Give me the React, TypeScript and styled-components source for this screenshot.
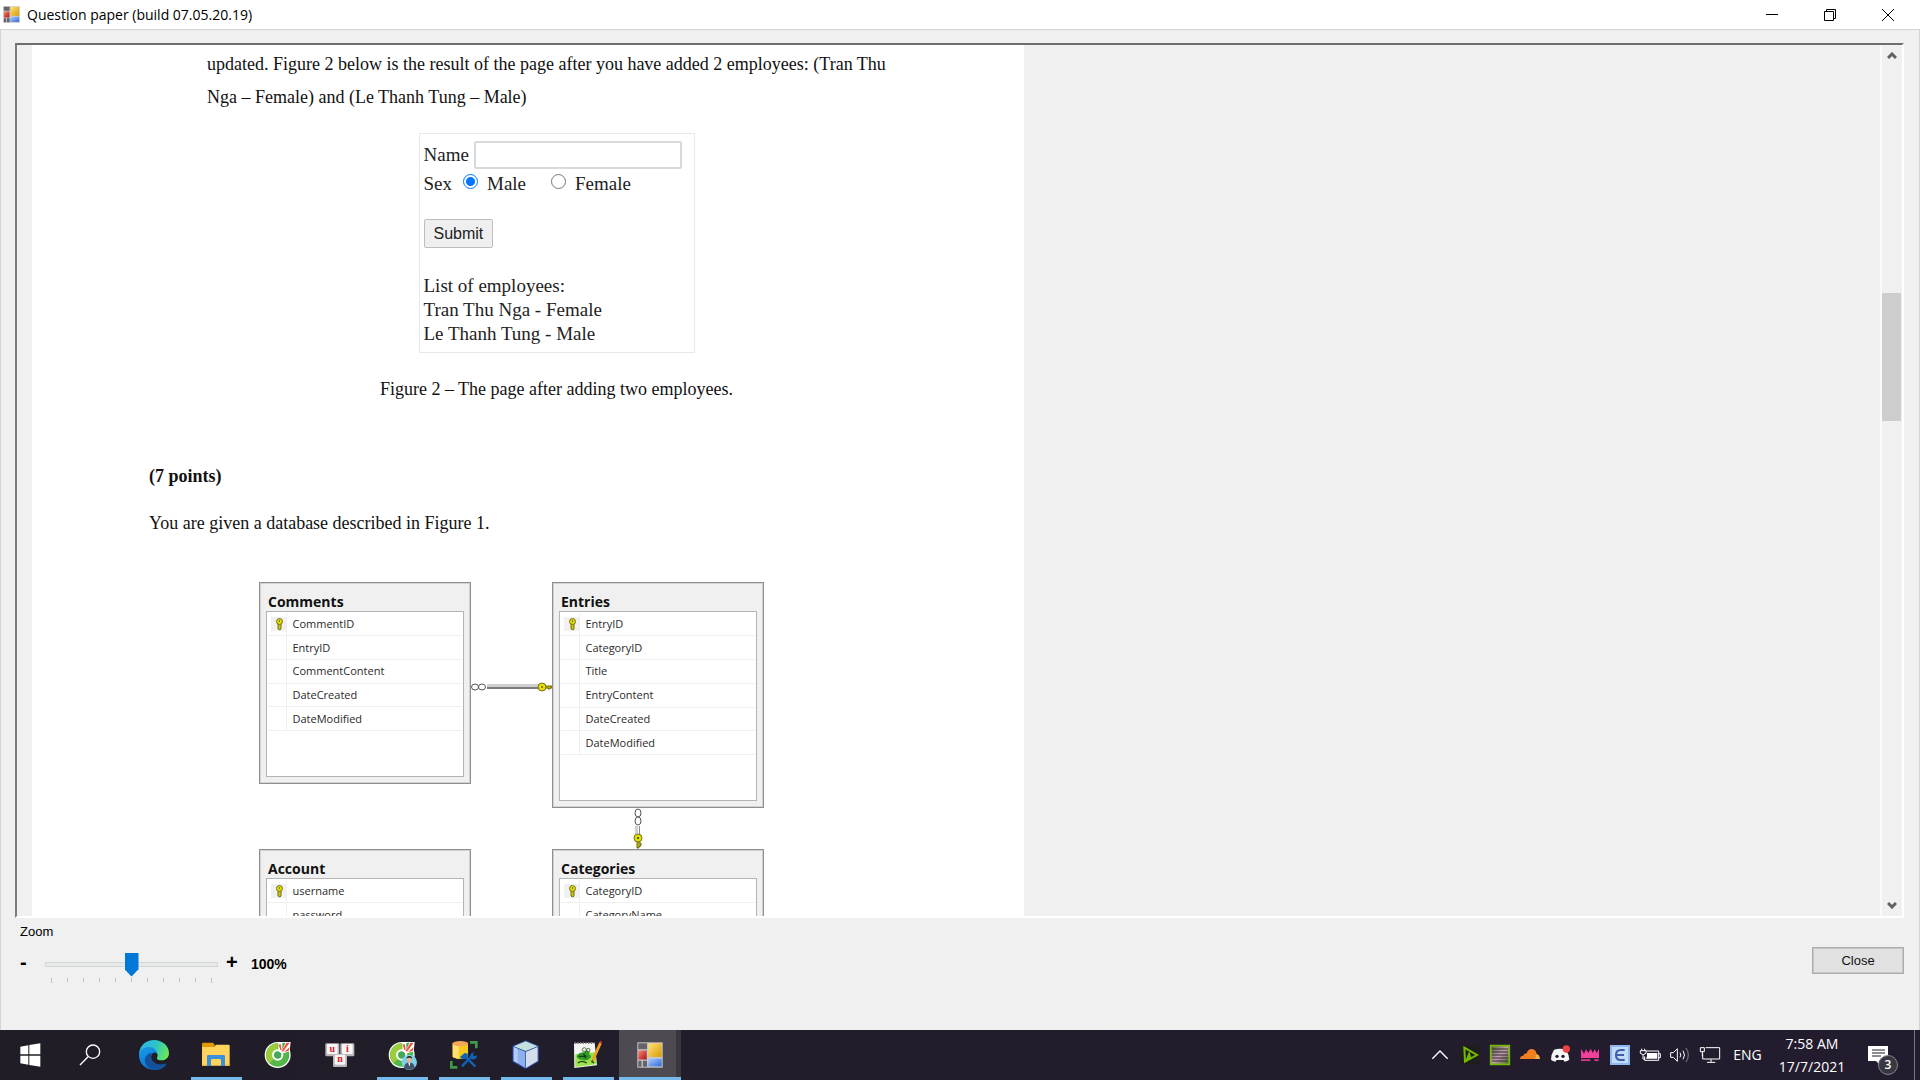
import React from "react";
import styled, { createGlobalStyle } from "styled-components";

const sans = `"Liberation Sans", Arial, sans-serif`;
const serif = `"Liberation Serif", "Times New Roman", serif`;
const ui = `"Open Sans", "Noto Sans", sans-serif`;

const GlobalStyle = createGlobalStyle`
  *, *::before, *::after { box-sizing: border-box; }
  body { margin: 0; background: #f0f0f0; overflow: hidden; }
  button { cursor: default; }
`;

/* ---------- window ---------- */

const Desktop = styled.div`
  display: flex;
  flex-direction: column;
  height: 100vh;
  color: #000;
  font-family: ${sans};
  font-size: 13px;
`;

const TitleBar = styled.header`
  display: flex;
  align-items: center;
  flex: none;
  height: 29px;
  padding: 0 3px;
  background: #fff;
`;

const Title = styled.h1`
  flex: 1;
  margin: 0 0 0 7px;
  font: 400 14px/20px ${ui};
`;

const CaptionButton = styled.button`
  display: grid;
  place-items: center;
  width: 58px;
  height: 29px;
  padding: 0;
  border: 0;
  background: transparent;
`;

const Client = styled.main`
  display: flex;
  flex-direction: column;
  flex: 1;
  min-height: 0;
  padding: 13px 15px 0 14px;
  border: 1px solid #d4d4d4;
  border-bottom: 0;
  background: #f0f0f0;
`;

const Viewer = styled.section`
  display: flex;
  flex: 1;
  min-height: 0;
  border: 2px solid;
  border-color: #6e6e6e #fff #fff #7c7c7c;
  overflow: hidden;
`;

const Canvas = styled.div`
  flex: 1;
  min-width: 0;
  padding-left: 15px;
  overflow: hidden;
`;

const ScrollBar = styled.div`
  display: flex;
  flex-direction: column;
  flex: none;
  width: 22px;
  padding-right: 1px;
  border-left: 2px solid #fafafa;
  background: #f0f0f0;
`;

const ScrollArrow = styled.button`
  display: grid;
  place-items: center;
  flex: none;
  height: 22px;
  padding: 0;
  border: 0;
  background: transparent;
`;

const ScrollGap = styled.div<{ $grow: number }>`
  flex: ${(p) => p.$grow} 1 0;
`;

const ScrollThumb = styled.div`
  flex: 128 1 0;
  background: #cdcdcd;
`;

/* ---------- document ---------- */

const Page = styled.article`
  width: 992px;
  max-width: 100%;
  min-height: 100%;
  padding: 3px 60px 0 117px;
  background: #fff;
  color: #111;
  font: 18px/33px ${serif};
`;

const Paragraph = styled.p<{ $indent?: boolean; $top?: number; $bold?: boolean; $center?: boolean }>`
  margin: ${(p) => p.$top ?? 0}px 0 0;
  padding-left: ${(p) => (p.$indent ? 58 : 0)}px;
  font-weight: ${(p) => (p.$bold ? 700 : 400)};
  text-align: ${(p) => (p.$center ? "center" : "left")};
`;

const EmployeeForm = styled.form`
  width: 276px;
  margin: 19px auto 0;
  padding: 7px 4px 6px;
  border: 1px solid #e9e9e9;
  color: #222;
  font-size: 19px;
  line-height: 24px;
`;

const FormRow = styled.div<{ $height: number }>`
  display: flex;
  align-items: center;
  height: ${(p) => p.$height}px;
`;

const NameInput = styled.input`
  width: 208px;
  height: 28px;
  margin-left: 5px;
  padding: 0 4px;
  border: 2px solid #d9d9d9;
  border-radius: 2px;
  background: #fff;
  font: 16px ${sans};
`;

const Radio = styled.input`
  appearance: none;
  width: 15px;
  height: 15px;
  margin: 0 9px 6px 0;
  border: 1px solid #767676;
  border-radius: 50%;
  background: #fff;
  &:checked {
    border-color: #0075ff;
    background: radial-gradient(circle, #0075ff 4px, #fff 5px);
  }
`;

const Choice = styled.label<{ $gap: number }>`
  display: flex;
  align-items: center;
  margin-left: ${(p) => p.$gap}px;
`;

const SubmitButton = styled.button`
  display: block;
  height: 29px;
  margin: 20px 0 26px;
  padding: 0 9px;
  border: 1px solid #bdbdbd;
  border-radius: 2px;
  background: #efefef;
  color: #222;
  font: 16px ${sans};
`;

/* ---------- diagram ---------- */

const Diagram = styled.div`
  display: grid;
  grid-template-columns: 212px 81px 212px;
  grid-template-rows: auto 41px auto;
  align-items: start;
  margin: 42px 0 0 110px;
`;

const Entity = styled.section<{ $row: number; $column: number }>`
  grid-area: ${(p) => p.$row} / ${(p) => p.$column};
  padding: 7px 6px 6px;
  border: 1px solid #8f8f8f;
  background: #f0f0f0;
  box-shadow: inset 0 0 0 1px #d2d2d2;
`;

const EntityName = styled.h2`
  margin: 0;
  padding: 2px 0 0 2px;
  color: #111;
  font: 700 14px/19px ${ui};
`;

const EntityBody = styled.div`
  padding: 1px 1px 45px;
  border: 1px solid #b4b4b4;
  background: #fff;
`;

const Fields = styled.table<{ $rows: number }>`
  width: 100%;
  height: ${(p) => Math.round((p.$rows * 142) / 6)}px;
  border-collapse: collapse;
  color: #2a2a2a;
  font: 11px/14px ${ui};
  td {
    padding: 0 0 0 6px;
    border-bottom: 1px solid #efefef;
  }
  td:first-child {
    width: 18px;
    padding: 0 0 0 3px;
    border-right: 1px solid #efefef;
  }
`;

const KeyCell = styled.span`
  display: flex;
  justify-content: flex-end;
  padding-right: 2px;
  background: #f1f1f1;
`;

const HorizontalLink = styled.svg`
  grid-area: 1 / 2;
  margin-top: 98px;
`;

const VerticalLink = styled.svg`
  grid-area: 2 / 3;
  margin-left: 78px;
`;

/* ---------- footer ---------- */

const Footer = styled.footer`
  display: flex;
  justify-content: space-between;
  align-items: flex-start;
  flex: none;
  height: 112px;
  padding-left: 5px;
`;

const ZoomLabel = styled.label`
  display: block;
  margin-top: 6px;
  line-height: 16px;
`;

const ZoomRow = styled.div`
  display: flex;
  align-items: flex-start;
  margin-top: 11px;
`;

const StepButton = styled.button`
  width: 25px;
  height: 22px;
  padding: 0;
  border: 0;
  background: transparent;
  color: #000;
  font: 700 20px/20px ${sans};
  text-align: left;
`;

const SliderBox = styled.div`
  width: 173px;
  margin-right: 8px;
  padding-top: 1px;
`;

const Slider = styled.input`
  appearance: none;
  display: block;
  width: 100%;
  height: 24px;
  margin: 0;
  background: transparent;
  &::-webkit-slider-runnable-track {
    height: 5px;
    border: 1px solid #d6d6d6;
    background: #e7eaea;
  }
  &::-webkit-slider-thumb {
    appearance: none;
    width: 14px;
    height: 24px;
    margin-top: -10px;
    background: #0078d7;
    clip-path: polygon(0 0, 100% 0, 100% 70%, 50% 100%, 0 70%);
  }
`;

const Ticks = styled.div`
  display: flex;
  justify-content: space-between;
  padding: 2px 6px 0;
`;

const Tick = styled.span`
  width: 1px;
  height: 4px;
  background: #c0c0c0;
  &:first-child, &:last-child { height: 5px; }
`;

const ZoomValue = styled.output`
  font: 700 14px/26px ${sans};
`;

const CloseButton = styled.button`
  width: 92px;
  height: 27px;
  margin-top: 29px;
  padding: 0;
  border: 1px solid #adadad;
  outline: 1px solid #c6c6c6;
  outline-offset: -2px;
  background: #e1e1e1;
  color: #111;
  font: 13px ${sans};
`;

/* ---------- taskbar ---------- */

const Taskbar = styled.nav`
  display: flex;
  flex: none;
  height: 50px;
  background: linear-gradient(90deg, #201d27, #231c2f);
  color: #fff;
  font: 14px/22px ${ui};
`;

const TaskButton = styled.button<{ $open?: boolean; $active?: boolean }>`
  display: grid;
  place-items: center;
  width: 62px;
  height: 50px;
  padding: 0;
  border: 0;
  background:
    linear-gradient(#76b9ed, #76b9ed) center bottom / ${(p) => (p.$active ? 62 : p.$open ? 51 : 0)}px 3px no-repeat,
    ${(p) => (p.$active ? "linear-gradient(90deg, #4d4a51 57px, #39363e 57px)" : "none")};
  &:first-child { width: 61px; }
`;

const Tray = styled.div`
  display: flex;
  align-items: center;
  margin-left: auto;
`;

const TrayButton = styled.button`
  display: grid;
  place-items: center;
  width: 30px;
  height: 50px;
  padding: 0;
  border: 0;
  background: transparent;
`;

const Language = styled.button`
  width: 45px;
  padding: 0;
  border: 0;
  background: transparent;
  color: inherit;
  font: inherit;
`;

const Clock = styled.time`
  width: 84px;
  line-height: 23px;
  text-align: center;
`;

const NoticeButton = styled.button`
  width: 61px;
  height: 50px;
  padding: 0 0 0 14px;
  border: 0;
  border-right: 1px solid #77737f;
  margin-right: 5px;
  background: transparent;
  text-align: left;
`;

const NoticeMark = styled.span`
  display: block;
  position: relative;
  width: 32px;
  height: 20px;
`;

const Badge = styled.span`
  position: absolute;
  left: 10px;
  top: 10px;
  width: 20px;
  height: 20px;
  border: 1px solid #85828a;
  border-radius: 50%;
  background: #3a3740;
  color: #fff;
  font: 600 12px/18px ${ui};
  text-align: center;
`;

/* ---------- drawings ---------- */

const FormsIcon = ({ size }: { size: number }) => (
  <svg width={size} height={size} viewBox="0 0 80 80" aria-hidden="true">
    <defs>
      <linearGradient id="fy" x2="1" y2="1"><stop stopColor="#ffe27a" /><stop offset="1" stopColor="#d99b00" /></linearGradient>
      <linearGradient id="fr" x2="1" y2="1"><stop stopColor="#f58a7a" /><stop offset="1" stopColor="#b01010" /></linearGradient>
      <linearGradient id="fb" x2="1" y2="1"><stop stopColor="#a9ccff" /><stop offset="1" stopColor="#2f68d8" /></linearGradient>
    </defs>
    <path d="M1 1h78v78H1z" fill="#c9c8cc" />
    <path d="M4 4h27v18H4zM4 58h10v18H4zM18 58h13v18H18z" fill="#66646b" />
    <path d="M35 4h41v42H35z" fill="url(#fy)" />
    <path d="M4 26h26v28H4z" fill="url(#fr)" />
    <path d="M35 51h41v24H35z" fill="url(#fb)" />
  </svg>
);

const Task = ({ children }: { children: React.ReactNode }) => (
  <svg width="32" height="32" viewBox="0 0 96 96" aria-hidden="true">{children}</svg>
);

const TrayIcon = ({ children }: { children: React.ReactNode }) => (
  <svg width="24" height="24" viewBox="0 0 72 72" fill="none" aria-hidden="true">{children}</svg>
);

const CocCocMark = () => (
  <>
    <circle cx="47" cy="48" r="39" fill="#fff" />
    <circle cx="47" cy="48" r="35" fill="#54b848" />
    <path d="M47 13a35 35 0 0 0-24 60l24-25z" fill="#9bcc3c" />
    <circle cx="47" cy="48" r="17" fill="#fff" />
    <circle cx="47" cy="48" r="11" fill="#43a956" />
    <path d="M49 9h37l-3 28-24 7-10-9z" fill="#fff" />
    <path d="M50 17l6-2 3 19-4-1zM73 12l10-1-20 27-4-2zM66 40l17-16-3 11z" fill="#f0503c" />
    <path d="M61 12l9-1-9 21z" fill="#43a956" />
  </>
);

const KeyGlyph = () => (
  <svg width="9" height="14" viewBox="0 0 9 14" aria-hidden="true">
    <path d="M3 6h3v6l-1 1-2-1z" fill="#c9c400" stroke="#77741a" />
    <ellipse cx="4.5" cy="4.5" rx="3" ry="3" fill="#dedb00" stroke="#77741a" />
    <path d="M4 3h1v2H4z" fill="#77741a" />
  </svg>
);

const UniKey = ({ x, y, t }: { x: number; y: number; t: string }) => (
  <>
    <rect x={x} y={y} width="42" height="39" rx="4" fill="#b9b7b9" />
    <rect x={x + 5} y={y + 2} width="32" height="30" rx="4" fill="#f7f5f5" />
    <text x={x + 21} y={y + 25} textAnchor="middle" fontFamily="Liberation Serif" fontWeight="700" fontSize="30" fill="#e52020">{t}</text>
  </>
);

/* ---------- data ---------- */

const entities = [
  { name: "Comments", row: 1, column: 1, fields: ["CommentID", "EntryID", "CommentContent", "DateCreated", "DateModified"] },
  { name: "Entries", row: 1, column: 3, fields: ["EntryID", "CategoryID", "Title", "EntryContent", "DateCreated", "DateModified"] },
  { name: "Account", row: 3, column: 1, fields: ["username", "password"] },
  { name: "Categories", row: 3, column: 3, fields: ["CategoryID", "CategoryName"] },
];

export default function App() {
  const [zoom, setZoom] = React.useState(100);
  return (
    <Desktop>
      <GlobalStyle />
      <TitleBar>
        <FormsIcon size={17} />
        <Title>Question paper (build 07.05.20.19)</Title>
        <CaptionButton aria-label="Minimize">
          <svg width="12" height="12"><path d="M0 5.500h12" stroke="#000" /></svg>
        </CaptionButton>
        <CaptionButton aria-label="Restore">
          <svg width="12" height="12" fill="none" stroke="#000"><path d="M.5 2.500h9v9h-9zM2.500 2.500v-2h9v9h-2" /></svg>
        </CaptionButton>
        <CaptionButton aria-label="Close window">
          <svg width="12" height="12" stroke="#000"><path d="M0 0l12 12M12 0L0 12" /></svg>
        </CaptionButton>
      </TitleBar>

      <Client>
        <Viewer>
          <Canvas>
            <Page>
              <Paragraph $indent>
                updated. Figure 2 below is the result of the page after you have added 2 employees: (Tran Thu
                <br />
                Nga – Female) and (Le Thanh Tung – Male)
              </Paragraph>

              <EmployeeForm onSubmit={(e) => e.preventDefault()}>
                <FormRow $height={28}>
                  <label htmlFor="name">Name</label>
                  <NameInput id="name" type="text" />
                </FormRow>
                <FormRow $height={30}>
                  Sex
                  <Choice $gap={11}><Radio type="radio" name="sex" defaultChecked />Male</Choice>
                  <Choice $gap={25}><Radio type="radio" name="sex" />Female</Choice>
                </FormRow>
                <SubmitButton type="submit">Submit</SubmitButton>
                <div>List of employees:</div>
                <div>Tran Thu Nga - Female</div>
                <div>Le Thanh Tung - Male</div>
              </EmployeeForm>

              <Paragraph $center $top={20}>Figure 2 – The page after adding two employees.</Paragraph>
              <Paragraph $bold $top={54}>(7 points)</Paragraph>
              <Paragraph $top={14}>You are given a database described in Figure 1.</Paragraph>

              <Diagram>
                {entities.map(({ name, row, column, fields }) => (
                  <Entity key={name} $row={row} $column={column}>
                    <EntityName>{name}</EntityName>
                    <EntityBody>
                      <Fields $rows={fields.length} aria-label={name}>
                        <tbody>
                          {fields.map((field, i) => (
                            <tr key={field}>
                              <td>{i === 0 && <KeyCell><KeyGlyph /></KeyCell>}</td>
                              <td>{field}</td>
                            </tr>
                          ))}
                        </tbody>
                      </Fields>
                    </EntityBody>
                  </Entity>
                ))}
                <HorizontalLink width="81" height="14" viewBox="0 0 81 14" fill="none" aria-hidden="true">
                  <path d="M16 5.500h52" stroke="#d0d0d0" strokeWidth="3" />
                  <path d="M16 8h52" stroke="#7b7b7b" strokeWidth="2" />
                  <ellipse cx="4" cy="7" rx="3.500" ry="3" stroke="#555" fill="#fff" />
                  <ellipse cx="11" cy="7" rx="3.500" ry="3" stroke="#555" fill="#fff" />
                  <path d="M74 6h7v2h-2v1h-2V8h-3z" fill="#b8b400" stroke="#6d6a18" />
                  <circle cx="71" cy="7" r="4" fill="#e2df00" stroke="#77741a" />
                  <circle cx="71" cy="7" r="1" fill="#6d6a18" />
                </HorizontalLink>
                <VerticalLink width="16" height="41" viewBox="0 0 16 41" fill="none" aria-hidden="true">
                  <path d="M6.500 18v8" stroke="#d0d0d0" strokeWidth="3" />
                  <path d="M9.500 18v8" stroke="#8a8a8a" />
                  <ellipse cx="8" cy="5" rx="3" ry="4" stroke="#555" fill="#fff" />
                  <ellipse cx="8" cy="13" rx="3" ry="4" stroke="#555" fill="#fff" />
                  <path d="M7 33h2v2h2v3H9v2H7z" fill="#b8b400" stroke="#6d6a18" />
                  <circle cx="8" cy="30" r="4" fill="#e2df00" stroke="#77741a" />
                  <circle cx="8" cy="30" r="1" fill="#333" />
                </VerticalLink>
              </Diagram>
            </Page>
          </Canvas>
          <ScrollBar>
            <ScrollArrow aria-label="Scroll up">
              <svg width="10" height="8"><path d="M1 6l4-4 4 4" fill="none" stroke="#606060" strokeWidth="3" /></svg>
            </ScrollArrow>
            <ScrollGap $grow={226} />
            <ScrollThumb />
            <ScrollGap $grow={473} />
            <ScrollArrow aria-label="Scroll down">
              <svg width="10" height="8"><path d="M1 2l4 4 4-4" fill="none" stroke="#606060" strokeWidth="3" /></svg>
            </ScrollArrow>
          </ScrollBar>
        </Viewer>

        <Footer>
          <div>
            <ZoomLabel htmlFor="zoom">Zoom</ZoomLabel>
            <ZoomRow>
              <StepButton aria-label="Zoom out" onClick={() => setZoom(zoom - 10)}>-</StepButton>
              <SliderBox>
                <Slider id="zoom" type="range" min={0} max={200} value={zoom} onChange={(e) => setZoom(+e.target.value)} />
                <Ticks>{Array.from({ length: 11 }, (_, i) => <Tick key={i} />)}</Ticks>
              </SliderBox>
              <StepButton aria-label="Zoom in" onClick={() => setZoom(zoom + 10)}>+</StepButton>
              <ZoomValue htmlFor="zoom">{zoom}%</ZoomValue>
            </ZoomRow>
          </div>
          <CloseButton>Close</CloseButton>
        </Footer>
      </Client>

      <Taskbar>
        <TaskButton aria-label="Start">
          <Task><path d="M16 23l24-4v27H16zM43 18l33-5v33H43zM16 50h24v27l-24-4zM43 50h33v33l-33-5z" fill="#fff" /></Task>
        </TaskButton>
        <TaskButton aria-label="Search">
          <Task><g fill="none" stroke="#fff" strokeWidth="4"><circle cx="51" cy="38" r="20" /><path d="M36 53L12 78" /></g></Task>
        </TaskButton>
        <TaskButton aria-label="Microsoft Edge">
          <Task>
            <defs>
              <linearGradient id="e1" x1="0" y1=".3" x2="1" y2=".6"><stop stopColor="#2fb5e8" /><stop offset=".5" stopColor="#2cc3c9" /><stop offset="1" stopColor="#6be850" /></linearGradient>
              <linearGradient id="e2" x1="0" y1="0" x2=".6" y2="1"><stop stopColor="#1a9be8" /><stop offset="1" stopColor="#0a6fd0" /></linearGradient>
            </defs>
            <path d="M3 44C6 18 25 3 48 3c27 0 45 20 45 39 0 15-11 22-22 22-10 0-16-4-14-8 5-8 1-20-15-20C22 36 8 42 3 44z" fill="url(#e1)" />
            <path d="M3 46c3-16 16-22 30-22 14 0 24 9 24 20-4-6-14-4-17 5-5 19 10 33 26 33 7 0 12-2 18-4-8 9-20 15-35 15C22 93 2 73 3 46z" fill="url(#e2)" />
            <path d="M41 41c-17 3-25 19-18 33 6 12 17 18 29 19 14 0 27-8 34-19-4-2-14 4-24 2-15-3-27-17-21-35z" fill="#12529c" />
          </Task>
        </TaskButton>
        <TaskButton $open aria-label="File Explorer">
          <Task>
            <path d="M6 14q0-3 3-3h30l6 8-4 6H6z" fill="#e09a00" />
            <path d="M6 24h36l6-7h38q3 0 3 3v60H6z" fill="#ffd35c" />
            <path d="M21 81V52q0-4 4-4h46q4 0 4 4v29H63V63q0-3-3-3H36q-3 0-3 3v18z" fill="#3a8fd9" />
            <path d="M6 77h15v4H6zM75 77h14v4H75z" fill="#e9b233" />
          </Task>
        </TaskButton>
        <TaskButton aria-label="Browser"><Task><CocCocMark /></Task></TaskButton>
        <TaskButton aria-label="Keyboard">
          <Task><UniKey x={4} y={13} t="u" /><UniKey x={49} y={13} t="i" /><UniKey x={27} y={45} t="n" /></Task>
        </TaskButton>
        <TaskButton $open aria-label="Browser profile">
          <Task>
            <CocCocMark />
            <circle cx="70" cy="70" r="23" fill="#7fd0ea" />
            <path d="M54 86q2-15 16-16 14 1 16 16-16 12-32 0z" fill="#44536b" />
            <ellipse cx="70" cy="62" rx="7" ry="9" fill="#e8b48a" />
            <path d="M62 60q-1-9 8-9t8 9l-3-4H65z" fill="#222" />
            <path d="M67 71h6l-3 12z" fill="#fff" />
          </Task>
        </TaskButton>
        <TaskButton $open aria-label="Database tools">
          <Task>
            <path d="M14 12v42q23 12 46 0V12z" fill="#f7c81e" />
            <path d="M14 12v42q9 5 18 6V12z" fill="#ffe070" />
            <ellipse cx="37" cy="14" rx="23" ry="8" fill="#f2a65a" />
            <path d="M66 6h23v22h-8V14H66zM6 66h8v15h14v8H6z" fill="#3f9b45" />
            <path d="M42 82l32-34M50 50l32 33" stroke="#0f63b5" strokeWidth="7" />
            <path d="M36 54l14-12 14 4-6 4 2 6-6 6-6-4-4 4zM66 52l4-9 8-3-3 8 4 4 8-3-2 9-9 4-8-3z" fill="#0f63b5" />
          </Task>
        </TaskButton>
        <TaskButton $open aria-label="NetBeans">
          <Task>
            <path d="M47 4l40 16v48L47 91 7 68V20z" fill="#26408f" />
            <path d="M47 7l36 15-36 14L11 22z" fill="#c5e0dc" />
            <path d="M11 24l35 14v49L11 66z" fill="#8fb0ef" />
            <path d="M48 38l35-14v42L48 87z" fill="#d3dcea" />
            <path d="M11 24l12 5v44l-12-7z" fill="#b3cbf8" />
          </Task>
        </TaskButton>
        <TaskButton $open aria-label="Notepad++">
          <Task>
            <path d="M6 13l62-2 7 68-68 8z" fill="#f4f6f4" />
            <path d="M10 46l60-6 3 36-63 8z" fill="#9be24a" />
            <path d="M8 12h58" stroke="#7b7b7b" strokeWidth="6" strokeDasharray="4 4" />
            <path d="M14 52q6-12 22-12 6-10 14-6 6 6 0 12 10 2 6 10-12 12-24 6-14 2-18-10z" fill="#2f9a2a" />
            <path d="M20 52h24M34 44q8 6 6 14M18 72q12-10 26 0M58 66l8 6" stroke="#163f14" strokeWidth="4" fill="none" />
            <circle cx="37" cy="32" r="6" fill="#e9f5d8" stroke="#163f14" strokeWidth="2" />
            <circle cx="49" cy="33" r="5" fill="#e9f5d8" stroke="#163f14" strokeWidth="2" />
            <path d="M82 10l7 4-22 50-8 6 1-11z" fill="#f0a020" />
            <path d="M82 10l7 4 1-6-5-3z" fill="#c33" />
            <path d="M60 63l4 3-5 5z" fill="#333" />
          </Task>
        </TaskButton>
        <TaskButton $active aria-label="Question paper"><FormsIcon size={26} /></TaskButton>

        <Tray>
          <TrayButton aria-label="Show hidden icons"><TrayIcon><path d="M13 47l23-23 23 23" stroke="#fff" strokeWidth="4" /></TrayIcon></TrayButton>
          <TrayButton aria-label="Graphics">
            <TrayIcon><path d="M6 8h58v56H6z" fill="#1c1f1a" /><path d="M19 14l38 22-36 20z" stroke="#76b900" strokeWidth="6" /><path d="M21 56l13-32 6 22z" fill="#76b900" /></TrayIcon>
          </TrayButton>
          <TrayButton aria-label="Monitor">
            <TrayIcon>
              <defs><linearGradient id="mon" x2="1" y2="1"><stop stopColor="#4e5d38" /><stop offset=".5" stopColor="#c89ab8" /><stop offset="1" stopColor="#45662c" /></linearGradient></defs>
              <path d="M8 8h56v56H8z" fill="url(#mon)" stroke="#76b900" strokeWidth="5" />
              <path d="M12 18h48M12 27h48M12 36h48M12 45h48M12 54h48" stroke="#2b2b2b" strokeWidth="3" />
            </TrayIcon>
          </TrayButton>
          <TrayButton aria-label="Cloudflare">
            <TrayIcon><path d="M6 48q0-9 10-10 2-8 9-6 5-15 17-14 12 2 14 15-2 5-6 15z" fill="#f38020" /><path d="M50 48l5-15q10 2 11 15z" fill="#faae40" /></TrayIcon>
          </TrayButton>
          <TrayButton aria-label="Discord">
            <TrayIcon>
              <path d="M18 20q18-6 36 0 9 14 10 30-6 5-14 6l-4-5H26l-4 5q-8-1-13-6 0-16 9-30z" fill="#f5f5f5" />
              <circle cx="27" cy="40" r="5" fill="#231c2f" /><circle cx="45" cy="40" r="5" fill="#231c2f" />
              <circle cx="55" cy="18" r="11" fill="#ee4245" />
            </TrayIcon>
          </TrayButton>
          <TrayButton aria-label="Crown">
            <TrayIcon><path d="M9 18l9 14 6-13 7 11 7-13 6 13 6-11 6 11 7-13v28H9z" fill="#f0409a" /><path d="M9 49h28v5H9zM44 49h5v5h13v-5" fill="#d83a8c" /></TrayIcon>
          </TrayButton>
          <TrayButton aria-label="Input editor">
            <TrayIcon>
              <path d="M6 6h60v60H6z" fill="#8fb6ee" /><path d="M12 12h48v48H12z" fill="#c3dbfb" />
              <path d="M50 21H38Q24 21 24 36t14 15h12M25 36h23" stroke="#3c5da8" strokeWidth="6" />
            </TrayIcon>
          </TrayButton>
          <TrayButton aria-label="Battery">
            <TrayIcon><path d="M24 24h38v28H20V40M62 32h5v12h-5" stroke="#fff" strokeWidth="3" /><path d="M27 30h31v17H24l3-7z" fill="#fff" /><path d="M11 17v6M20 17v6M7 23h17v8q-8 8-17 0zM15 34v14h6" stroke="#fff" strokeWidth="3" /></TrayIcon>
          </TrayButton>
          <TrayButton aria-label="Volume">
            <TrayIcon><path d="M8 29h8l12-12v38L16 43H8z" stroke="#fff" strokeWidth="3" /><path d="M36 29q5 7 0 14M45 23q9 13 0 26" stroke="#fff" strokeWidth="3" /><path d="M54 15q14 21 0 42" stroke="#858090" strokeWidth="3" /></TrayIcon>
          </TrayButton>
          <TrayButton aria-label="Network">
            <TrayIcon><path d="M23 14h42v34H14V31M39 48v10M27 58h25" stroke="#fff" strokeWidth="3" /><path d="M7 14h12v12H7zM13 26v14" stroke="#fff" strokeWidth="3" /></TrayIcon>
          </TrayButton>
          <Language>ENG</Language>
          <Clock>7:58 AM<br />17/7/2021</Clock>
          <NoticeButton aria-label="Notifications">
            <NoticeMark>
              <svg width="20" height="20" viewBox="0 0 20 20"><path d="M0 1h20v15h-9v3l-3-3H0z" fill="#fff" /><path d="M4 5h13M4 8h13M4 11h9" stroke="#231c2f" /></svg>
              <Badge>3</Badge>
            </NoticeMark>
          </NoticeButton>
        </Tray>
      </Taskbar>
    </Desktop>
  );
}
